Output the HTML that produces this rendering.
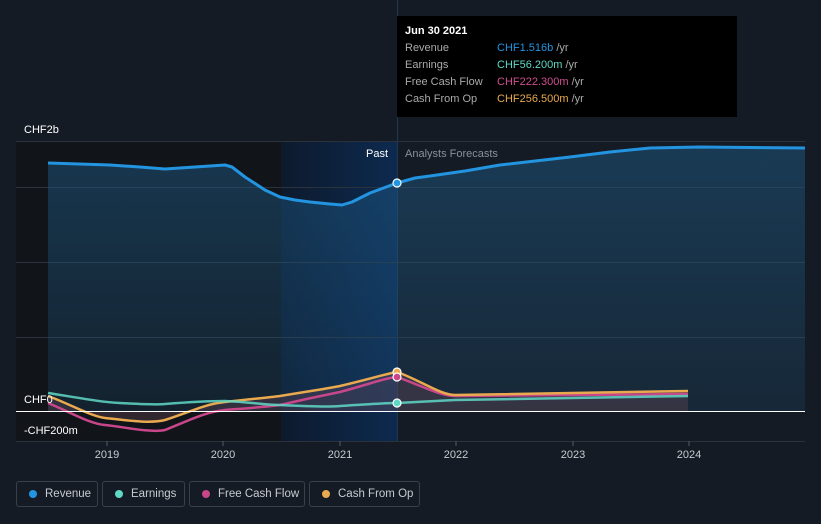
<!DOCTYPE html><html><head><style>
body{margin:0;background:#151b24;font-family:"Liberation Sans",sans-serif;width:821px;height:524px;overflow:hidden;position:relative}
.leg{position:absolute;top:481px;height:26px;border:1px solid #3a3f48;border-radius:3px;color:#c8cbd0;font-size:11.5px;line-height:24px;box-sizing:border-box;padding-left:28px;white-space:nowrap}
.leg i{position:absolute;left:12px;top:8px;width:8px;height:8px;border-radius:50%}
.tt{position:absolute;left:397px;top:16px;width:340px;height:101px;background:#000;color:#fff;font-size:11px}
.tt div{position:absolute;left:8px;white-space:nowrap;width:320px}
.tt span{position:absolute;left:92px;white-space:nowrap}
</style></head><body>
<svg width="821" height="524" style="position:absolute;left:0;top:0">
<defs>
<linearGradient id="bl" x1="0" x2="1"><stop offset="0" stop-color="#0d1a2d"/><stop offset="1" stop-color="#0d2a4f"/></linearGradient>
<linearGradient id="rv" x1="0" y1="0" x2="0" y2="1"><stop offset="0" stop-color="#1e5a85" stop-opacity=".5"/><stop offset="1" stop-color="#1e5a85" stop-opacity=".2"/></linearGradient>
</defs>
<rect x="16" y="141" width="265" height="300" fill="#111419"/>
<rect x="281" y="141" width="116" height="300" fill="url(#bl)"/>
<g stroke="#2c323c" stroke-width="1">
<line x1="16" y1="141.5" x2="805" y2="141.5"/><line x1="16" y1="187.5" x2="805" y2="187.5"/><line x1="16" y1="262.5" x2="805" y2="262.5"/><line x1="16" y1="337.5" x2="805" y2="337.5"/><line x1="16" y1="441.5" x2="805" y2="441.5"/>
<line x1="397.5" y1="0" x2="397.5" y2="441" stroke="#1e3656"/>
</g>
<path d="M48,163 L110,165 L140,167 L165,169 L195,167 L225,165 L232,167 L245,177 L265,190 L280,197 L295,200 L310,202 L330,204 L342,205 L352,202 L370,193 L397,183 L415,178 L430,176 L465,171 L500,165 L570,157 L610,152 L650,148 L700,147 L805,148 L805,412 L48,412Z" fill="url(#rv)"/>
<polyline points="48,163 110,165 140,167 165,169 195,167 225,165 232,167 245,177 265,190 280,197 295,200 310,202 330,204 342,205 352,202 370,193 397,183 415,178 430,176 465,171 500,165 570,157 610,152 650,148 700,147 805,148" fill="none" stroke="#2394e0" stroke-width="3" stroke-linejoin="round"/>
<path d="M48,396 C70,404 90,416 105,418 C125,420 150,424 165,420 C190,412 205,404 225,402 C250,399 265,398 280,396 C310,391 325,389 340,386 C370,379 385,374 397,372 C420,380 440,395 455,395 L688,391 L688,412 L48,412Z" fill="#6b4a5a" fill-opacity=".35"/>
<path d="M48,403 C70,412 90,424 105,425 C125,427 150,433 165,430 C190,420 205,412 225,410 C250,408 265,407 280,405 C310,398 325,395 340,392 C370,384 385,378 397,377 C420,385 440,396 455,396 L688,394" fill="none" stroke="#c8478a" stroke-width="2.5"/>
<path d="M48,396 C70,404 90,416 105,418 C125,420 150,424 165,420 C190,412 205,404 225,402 C250,399 265,398 280,396 C310,391 325,389 340,386 C370,379 385,374 397,372 C420,380 440,395 455,395 L688,391" fill="none" stroke="#e9a94f" stroke-width="2.5"/>
<path d="M48,393 C80,398 100,402 120,403 C140,404 155,405 165,404 C190,402 210,401 225,401 C250,402 265,405 280,405 C300,406 330,407 340,406 C370,404 385,403 397,403 L455,400 L688,396" fill="none" stroke="#5fd8c6" stroke-width="2.5" stroke-opacity=".85"/>
<line x1="16" y1="411.5" x2="805" y2="411.5" stroke="#fff"/>
<g stroke="#fff" stroke-width="1.2"><circle cx="397" cy="183" r="4" fill="#2394e0"/><circle cx="397" cy="372" r="4" fill="#e9a94f"/><circle cx="397" cy="377" r="4" fill="#c8478a"/><circle cx="397" cy="403" r="4" fill="#5fd8c6"/></g>
<g fill="#fff" font-size="11"><text x="24" y="133">CHF2b</text><text x="24" y="403">CHF0</text><text x="24" y="434">-CHF200m</text>
<text x="366" y="157">Past</text><text x="405" y="157" fill="#8a8f98">Analysts Forecasts</text>
<g fill="#c8cbd0" text-anchor="middle"><text x="107" y="458">2019</text><text x="223" y="458">2020</text><text x="340" y="458">2021</text><text x="456" y="458">2022</text><text x="573" y="458">2023</text><text x="689" y="458">2024</text></g></g>
<g stroke="#555b64"><line x1="107" y1="441" x2="107" y2="446"/><line x1="223" y1="441" x2="223" y2="446"/><line x1="340" y1="441" x2="340" y2="446"/><line x1="456" y1="441" x2="456" y2="446"/><line x1="573" y1="441" x2="573" y2="446"/><line x1="689" y1="441" x2="689" y2="446"/></g>
</svg>
<div class="tt">
<div style="top:9px;font-weight:bold">Jun 30 2021</div>
<div style="top:26px;color:#aaa">Revenue<span style="color:#2394e0">CHF1.516b <b style="color:#aaa;font-weight:normal">/yr</b></span></div>
<div style="top:43px;color:#aaa">Earnings<span style="color:#5fd8c6">CHF56.200m <b style="color:#aaa;font-weight:normal">/yr</b></span></div>
<div style="top:60px;color:#aaa">Free Cash Flow<span style="color:#d04f8f">CHF222.300m <b style="color:#aaa;font-weight:normal">/yr</b></span></div>
<div style="top:77px;color:#aaa">Cash From Op<span style="color:#e9a94f">CHF256.500m <b style="color:#aaa;font-weight:normal">/yr</b></span></div>
</div>
<div class="leg" style="left:16px;width:82px"><i style="background:#2394e0"></i>Revenue</div>
<div class="leg" style="left:102px;width:83px"><i style="background:#5fd8c6"></i>Earnings</div>
<div class="leg" style="left:189px;width:116px"><i style="background:#c8478a"></i>Free Cash Flow</div>
<div class="leg" style="left:309px;width:111px"><i style="background:#e9a94f"></i>Cash From Op</div>
</body></html>
